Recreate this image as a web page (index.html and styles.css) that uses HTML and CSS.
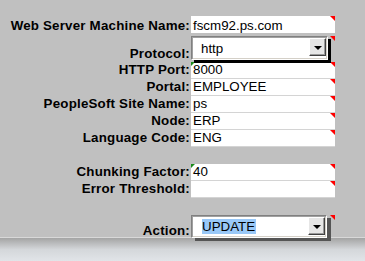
FILE: index.html
```html
<!DOCTYPE html>
<html lang="en">
<head>
    <meta charset="UTF-8">
    <meta name="viewport" content="width=device-width, initial-scale=1.0">
    <title>Gateway Setup</title>
    <link rel="stylesheet" href="styles.css">
</head>
<body>
    <div class="sheet">
        <div class="form">
            <div class="label first">Web Server Machine Name:</div>
            <div class="cell first note">fscm92.ps.com</div>

            <div class="label select-row">Protocol:</div>
            <div class="cell blank select-row note">
                <div class="dropdown dropdown-black">
                    <span class="dropdown-text">http</span>
                    <span class="dropdown-btn"><span class="arrow"></span></span>
                </div>
            </div>

            <div class="label">HTTP Port:</div>
            <div class="cell note flag">8000</div>

            <div class="label">Portal:</div>
            <div class="cell note">EMPLOYEE</div>

            <div class="label">PeopleSoft Site Name:</div>
            <div class="cell note">ps</div>

            <div class="label">Node:</div>
            <div class="cell note">ERP</div>

            <div class="label">Language Code:</div>
            <div class="cell note">ENG</div>

            <div class="spacer"></div>

            <div class="label">Chunking Factor:</div>
            <div class="cell note flag">40</div>

            <div class="label">Error Threshold:</div>
            <div class="cell note"></div>

            <div class="spacer"></div>

            <div class="label action-row">Action:</div>
            <div class="cell blank action-row note">
                <div class="dropdown dropdown-grey">
                    <span class="dropdown-text"><span class="selected">UPDATE</span></span>
                    <span class="dropdown-btn"><span class="arrow"></span></span>
                </div>
            </div>
        </div>
    </div>
    <div class="statusbar"></div>
</body>
</html>
```

FILE: styles.css
```css
/* Hoja general */
body {
    margin: 0;
    overflow: hidden;
    font-family: "Liberation Sans", Arial, sans-serif;
    font-size: 13.33px;
    color: #000;
    background-color: #c0c0c0;
}

.sheet {
    height: 237px;
}

/* Rejilla de etiquetas y celdas */
.form {
    display: grid;
    grid-template-columns: 190px 144px;
    column-gap: 1px;
    padding-top: 16px;
}

.label {
    height: 17px;
    line-height: 16px;
    text-align: right;
    font-weight: bold;
    letter-spacing: 0.2px;
    white-space: nowrap;
}

.cell {
    position: relative;
    box-sizing: border-box;
    height: 17px;
    line-height: 16px;
    padding-left: 2px;
    background: #fff;
    border-bottom: 1px solid #d4d4d4;
    white-space: nowrap;
}

.first {
    padding-top: 2px;
}

.cell.first {
    border-bottom: none;
}

.spacer {
    grid-column: 1 / -1;
    height: 17px;
}

/* Filas con desplegable */
.select-row {
    height: 27px;
}

.action-row {
    height: 24px;
}

.label.select-row,
.label.action-row {
    align-self: end;
    height: auto;
    line-height: 17px;
}

.cell.blank {
    background: transparent;
    border-bottom: none;
    padding-left: 0;
}

/* Triangulo rojo de comentario */
.note::after {
    content: "";
    position: absolute;
    top: 0;
    right: 0;
    border-left: 5px solid transparent;
    border-top: 5px solid #ff0000;
}

.select-row.note::after {
    top: 1px;
}

/* Triangulo verde de numero como texto */
.flag::before {
    content: "";
    position: absolute;
    top: 0;
    left: 0;
    border-right: 4px solid transparent;
    border-top: 4px solid #1a8a1a;
}

.dropdown {
    position: relative;
    z-index: 1;
    display: flex;
    box-sizing: border-box;
    width: 137px;
    height: 24px;
    background: #fff;
    border: 1px solid;
    border-color: #808080 #fff #fff #808080;
}

.dropdown-black {
    margin-top: 1px;
    box-shadow: inset 1px 1px 0 #a0a0a0, inset -1px -1px 0 #d4d0c8, 3px 3px 0 #000;
}

.dropdown-grey {
    width: 136px;
    height: 23px;
    box-shadow: inset 1px 1px 0 #a0a0a0, inset -1px -1px 0 #d4d0c8, 4px 3px 0 #555;
}

.dropdown-text {
    flex: 1;
    padding: 3px 0 0 9px;
    line-height: 17px;
}

.dropdown-grey .dropdown-text {
    padding: 2px 0 0 10px;
}

.selected {
    background: #99c8f7;
    padding: 0 1px 0 0;
}

.dropdown-btn {
    display: flex;
    align-items: center;
    justify-content: center;
    box-sizing: border-box;
    width: 17px;
    height: 18px;
    margin: 1px 1px 0 0;
    background: #e6e6e6;
    border: 1px solid;
    border-color: #fff #404040 #404040 #fff;
    box-shadow: inset -1px -1px 0 #9a9a9a;
}

.arrow {
    width: 0;
    height: 0;
    border-left: 4px solid transparent;
    border-right: 4px solid transparent;
    border-top: 4px solid #000;
    margin-top: 1px;
}

/* Barra inferior */
.statusbar {
    height: 24px;
    box-sizing: border-box;
    border-top: 1px solid #d8d8d8;
    background: linear-gradient(#a4a4a4, #d4d7da 50%, #e1e4e8);
}
```
